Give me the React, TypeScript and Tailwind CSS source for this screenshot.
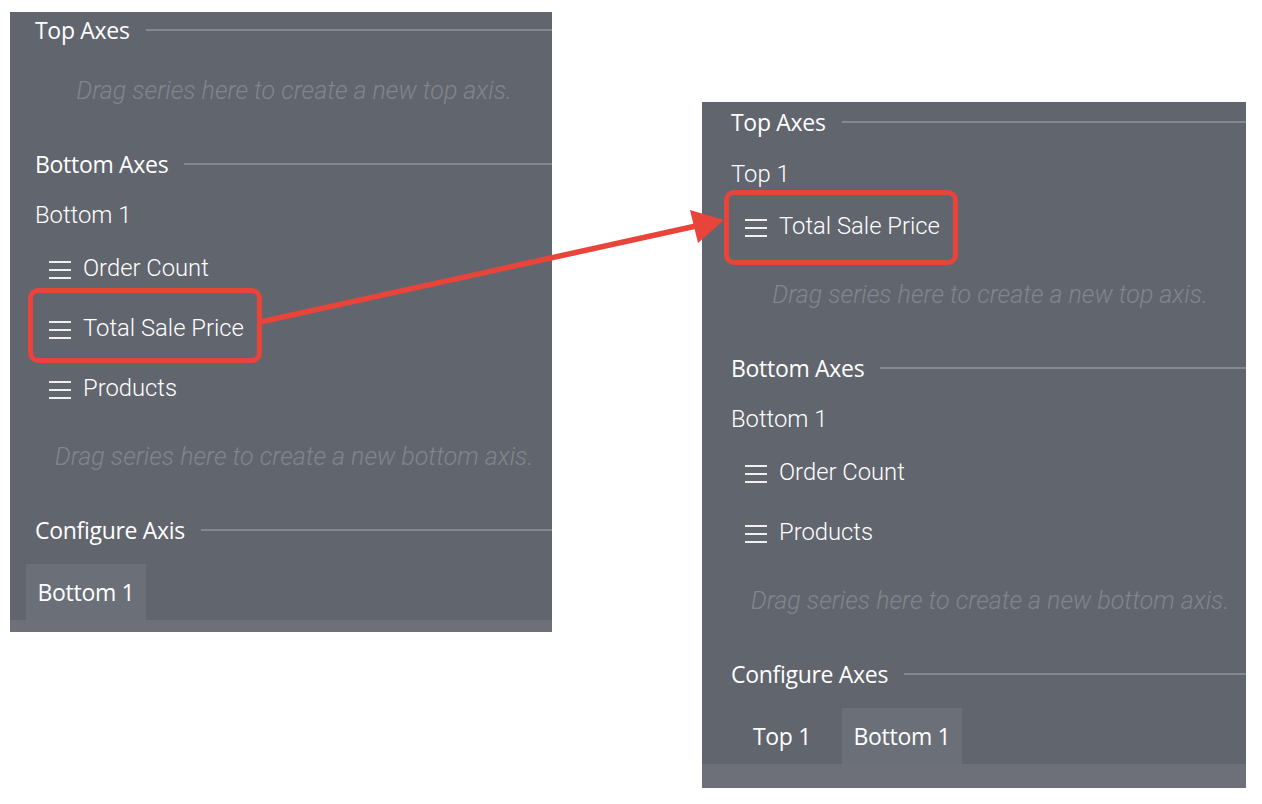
import React from "react";

const HEAD = "font-['Open_Sans',sans-serif] font-medium text-[23px] leading-none text-white whitespace-nowrap tracking-[-0.3px]";
const BODY = "font-['Roboto',sans-serif] font-light text-[23.8px] leading-none text-white whitespace-nowrap pt-[2px]";
const HINT = "font-['Roboto',sans-serif] font-light italic text-[25px] leading-none text-[#82858d] whitespace-nowrap";

function Header({ label, cls }: { label: string; cls: string }) {
  return (
    <div className={"flex items-center " + cls}>
      <span className={HEAD}>{label}</span>
      <div className="ml-4 flex-1 h-[2px] bg-[#858891]" />
    </div>
  );
}

function Hamburger() {
  return (
    <svg width="22" height="18" viewBox="0 0 22 18" className="mt-[3px] shrink-0">
      <line x1="0" y1="1" x2="22" y2="1" stroke="white" strokeWidth="1.8" />
      <line x1="0" y1="9" x2="22" y2="9" stroke="white" strokeWidth="1.8" />
      <line x1="0" y1="17" x2="22" y2="17" stroke="white" strokeWidth="1.8" />
    </svg>
  );
}

function Item({ label, cls, box }: { label: string; cls: string; box?: string }) {
  return (
    <div className={"relative flex items-center h-[60px] " + cls}>
      <Hamburger />
      <span className={BODY + " ml-3"}>{label}</span>
      {box ? <div className={box} /> : null}
    </div>
  );
}

function Hint({ label, cls }: { label: string; cls: string }) {
  return (
    <div className={"flex items-center justify-center " + cls}>
      <span className={HINT}>{label}</span>
    </div>
  );
}

export default function App() {
  return (
    <div className="relative w-[1262px] h-[804px] bg-white overflow-hidden">
      <div className="flex items-start pl-[10px]">
        {/* Left panel */}
        <div className="mt-[12px] w-[542px] h-[620px] bg-[#61656e] flex flex-col">
          <Header label="Top Axes" cls="h-[36px] pl-[25px]" />
          <Hint label="Drag series here to create a new top axis." cls="h-[84px] pl-[26px]" />
          <Header label="Bottom Axes" cls="mt-[14px] h-[36px] pl-[25px]" />
          <div className="mt-[10px] h-[46px] pl-[25px] flex items-center">
            <span className={BODY}>Bottom 1</span>
          </div>
          <Item label="Order Count" cls="pl-[39px]" />
          <Item
            label="Total Sale Price"
            cls="pl-[39px]"
            box="absolute left-[18px] top-[-10px] w-[234px] h-[75px] border-[5px] border-[#e8443a] rounded-[10px]"
          />
          <Item label="Products" cls="pl-[39px]" />
          <Hint label="Drag series here to create a new bottom axis." cls="h-[76px] pl-[26px]" />
          <Header label="Configure Axis" cls="mt-[18px] h-[36px] pl-[25px]" />
          <div className="mt-[16px] h-[56px] pl-[16px] flex">
            <div className="w-[120px] h-full bg-[#6b6f78] flex items-center justify-center">
              <span className={HEAD}>Bottom 1</span>
            </div>
          </div>
          <div className="flex-1 bg-[#6d7079]" />
        </div>

        {/* Right panel */}
        <div className="ml-[150px] mt-[102px] w-[544px] h-[686px] bg-[#61656e] flex flex-col">
          <Header label="Top Axes" cls="h-[40px] pl-[29px]" />
          <div className="mt-[10px] h-[44px] pl-[29px] flex items-center">
            <span className={BODY}>Top 1</span>
          </div>
          <Item
            label="Total Sale Price"
            cls="pl-[43px]"
            box="absolute left-[22px] top-[-6px] w-[234px] h-[75px] border-[5px] border-[#e8443a] rounded-[10px]"
          />
          <Hint label="Drag series here to create a new top axis." cls="h-[76px] pl-[32px]" />
          <Header label="Bottom Axes" cls="mt-[18px] h-[36px] pl-[29px]" />
          <div className="mt-[10px] h-[46px] pl-[29px] flex items-center">
            <span className={BODY}>Bottom 1</span>
          </div>
          <Item label="Order Count" cls="pl-[43px]" />
          <Item label="Products" cls="pl-[43px]" />
          <Hint label="Drag series here to create a new bottom axis." cls="h-[76px] pl-[32px]" />
          <Header label="Configure Axes" cls="mt-[18px] h-[36px] pl-[29px]" />
          <div className="mt-[16px] h-[56px] pl-[20px] flex">
            <div className="w-[120px] h-full flex items-center justify-center">
              <span className={HEAD}>Top 1</span>
            </div>
            <div className="w-[120px] h-full bg-[#6b6f78] flex items-center justify-center">
              <span className={HEAD}>Bottom 1</span>
            </div>
          </div>
          <div className="flex-1 bg-[#6d7079]" />
        </div>
      </div>

      {/* Annotation arrow */}
      <svg
        className="absolute left-0 top-0 pointer-events-none"
        width="1262"
        height="804"
        viewBox="0 0 1262 804"
      >
        <line x1="260" y1="322" x2="696" y2="226" stroke="#e8443a" strokeWidth="5.5" />
        <polygon points="724,220 690,210 698,243" fill="#e8443a" />
      </svg>
    </div>
  );
}
